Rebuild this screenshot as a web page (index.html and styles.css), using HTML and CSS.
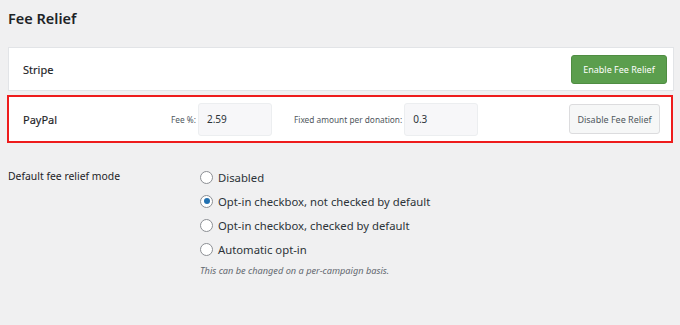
FILE: index.html
```html
<!DOCTYPE html>
<html lang="en">
<head>
<meta charset="utf-8">
<title>Fee Relief</title>
<link rel="stylesheet" href="styles.css">
</head>
<body>
<h2 class="title">Fee Relief</h2>
<div class="gateways">
  <div class="gateway">
    <span class="gw-name">Stripe</span>
    <button class="btn btn-enable" type="button">Enable Fee Relief</button>
  </div>
  <div class="gateway gateway-active">
    <span class="gw-name gw-name-fixed">PayPal</span>
    <label class="field-label" for="fee-pct">Fee %:</label>
    <input class="field-input" id="fee-pct" type="text" value="2.59">
    <label class="field-label field-label-spaced" for="fee-fixed">Fixed amount per donation:</label>
    <input class="field-input" id="fee-fixed" type="text" value="0.3">
    <button class="btn btn-disable" type="button">Disable Fee Relief</button>
  </div>
</div>
<div class="setting">
  <div class="setting-label">Default fee relief mode</div>
  <div class="setting-options">
    <label class="radio-row"><span class="radio"></span>Disabled</label>
    <label class="radio-row"><span class="radio radio-checked"></span>Opt-in checkbox, not checked by default</label>
    <label class="radio-row"><span class="radio"></span>Opt-in checkbox, checked by default</label>
    <label class="radio-row"><span class="radio"></span>Automatic opt-in</label>
    <p class="help">This can be changed on a per-campaign basis.</p>
  </div>
</div>
</body>
</html>
```
FILE: styles.css
```css
html, body {
  margin: 0;
  padding: 0;
  background: #f0f0f1;
}
body {
  padding: 0 8px;
  font-family: "Noto Sans", "Liberation Sans", sans-serif;
  color: #1d2327;
}
.title {
  margin: 8px 0 0;
  font-size: 14.5px;
  line-height: 20px;
  font-weight: 600;
  color: #1d2327;
}
.gateways {
  margin-top: 19px;
  width: 666px;
  display: flex;
  flex-direction: column;
  gap: 4px;
}
.gateway {
  box-sizing: border-box;
  height: 44px;
  background: #fff;
  border: 1px solid #e2e4e7;
  display: flex;
  align-items: center;
  padding: 0 6px 0 14px;
}
.gateway-active {
  height: 48px;
  border: 2px solid #ee1c1c;
  margin: 0 1px 0 -1px;
  padding: 0 11px 0 14px;
}
.gw-name {
  font-size: 11px;
  font-weight: 400;
  color: #1d2327;
  -webkit-text-stroke: 0.15px #1d2327;
}
.gw-name-fixed {
  flex: 0 0 148px;
}
.field-label {
  font-size: 8.3px;
  color: #50575e;
  margin-right: 2px;
}
.field-label-spaced {
  margin-left: 22px;
}
.field-input {
  box-sizing: border-box;
  width: 74px;
  height: 33px;
  border: 1px solid #eceef0;
  border-radius: 3px;
  background: #f7f7f9;
  padding: 0 8px;
  font-family: inherit;
  font-size: 10px;
  color: #2c3338;
}
.btn {
  box-sizing: border-box;
  margin-left: auto;
  padding: 0;
  white-space: nowrap;
  border-radius: 3px;
  font-family: inherit;
  font-size: 9px;
  cursor: pointer;
}
.btn-enable {
  width: 96px;
  height: 29px;
  background: #5b9e4d;
  border: 1px solid #4f8d42;
  color: #fff;
}
.btn-disable {
  width: 91px;
  height: 30px;
  background: #f6f7f7;
  border: 1px solid #dcdcde;
  color: #50575e;
}
.setting {
  margin-top: 22px;
  display: grid;
  grid-template-columns: 192px 1fr;
}
.setting-label {
  font-size: 10.4px;
  line-height: 22px;
  color: #1d2327;
}
.setting-options {
  display: flex;
  flex-direction: column;
}
.radio-row {
  display: flex;
  align-items: center;
  height: 24px;
  font-size: 11.3px;
  color: #2c3338;
}
.radio {
  box-sizing: border-box;
  width: 13px;
  height: 13px;
  border: 1px solid #8c8f94;
  border-radius: 50%;
  background: #fff;
  margin-right: 5px;
  display: flex;
  align-items: center;
  justify-content: center;
}
.radio-checked::after {
  content: "";
  width: 6px;
  height: 6px;
  border-radius: 50%;
  background: #2271b1;
}
.help {
  margin: 3px 0 0;
  font-size: 9.2px;
  line-height: 14px;
  font-style: italic;
  color: #646970;
}
```
